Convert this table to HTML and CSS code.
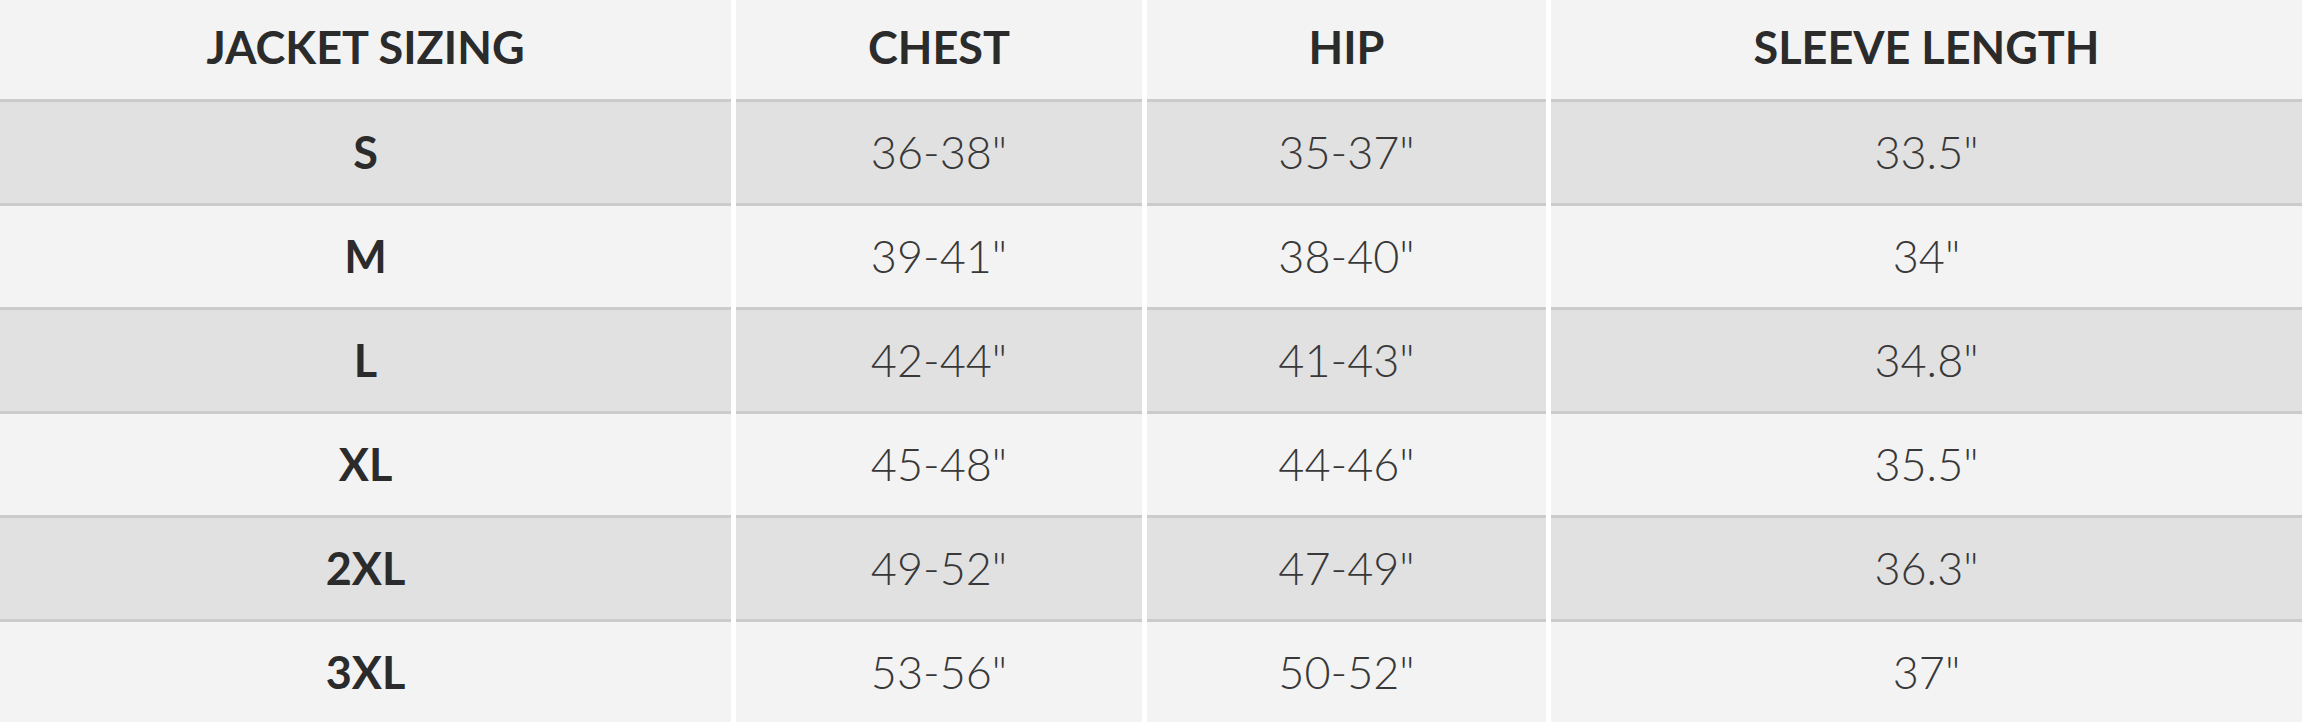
FILE: index.html
```html
<!DOCTYPE html>
<html lang="en">
<head>
<meta charset="utf-8">
<title>Jacket Sizing</title>
<link rel="stylesheet" href="styles.css">
</head>
<body>
<div class="wrap">
<table class="size-table">
  <colgroup>
    <col class="c1"><col class="c2"><col class="c3"><col class="c4">
  </colgroup>
  <thead>
    <tr><th>JACKET SIZING</th><th>CHEST</th><th>HIP</th><th>SLEEVE LENGTH</th></tr>
  </thead>
  <tbody>
    <tr class="dark"><td class="size">S</td><td>36-38"</td><td>35-37"</td><td>33.5"</td></tr>
    <tr><td class="size">M</td><td>39-41"</td><td>38-40"</td><td>34"</td></tr>
    <tr class="dark"><td class="size">L</td><td>42-44"</td><td>41-43"</td><td>34.8"</td></tr>
    <tr><td class="size">XL</td><td>45-48"</td><td>44-46"</td><td>35.5"</td></tr>
    <tr class="dark"><td class="size">2XL</td><td>49-52"</td><td>47-49"</td><td>36.3"</td></tr>
    <tr class="last"><td class="size">3XL</td><td>53-56"</td><td>50-52"</td><td>37"</td></tr>
  </tbody>
</table>
</div>
</body>
</html>
```
FILE: styles.css
```css
html, body {
  margin: 0;
  padding: 0;
  background: #ffffff;
}
body {
  width: 2302px;
  height: 722px;
  overflow: hidden;
  font-family: Lato, "Liberation Sans", sans-serif;
}
.wrap {
  overflow: hidden;
  width: 2302px;
}
.size-table {
  border-collapse: separate;
  border-spacing: 5px 0;
  margin: 0 -5px;
  width: 2312px;
  table-layout: fixed;
}
.c1 { width: 731px; }
.c2 { width: 406px; }
.c3 { width: 399px; }
.c4 { width: 751px; }

.size-table th,
.size-table td {
  padding: 0;
  text-align: center;
  vertical-align: middle;
  border-bottom: 3px solid #cbcbcb;
  background: #f3f3f3;
  font-size: 45px;
  line-height: 1;
}
.size-table th {
  height: 99px;
  box-sizing: content-box;
  font-weight: 700;
  color: #2b2b2b;
  padding-bottom: 4px;
  height: 95px;
}
.size-table td {
  height: 101px;
  font-weight: 300;
  color: #383838;
}
.size-table .dark td {
  background: #e1e1e1;
}
.size-table td.size {
  font-weight: 700;
  color: #2b2b2b;
}
.size-table .last td {
  border-bottom: 0;
}
```
